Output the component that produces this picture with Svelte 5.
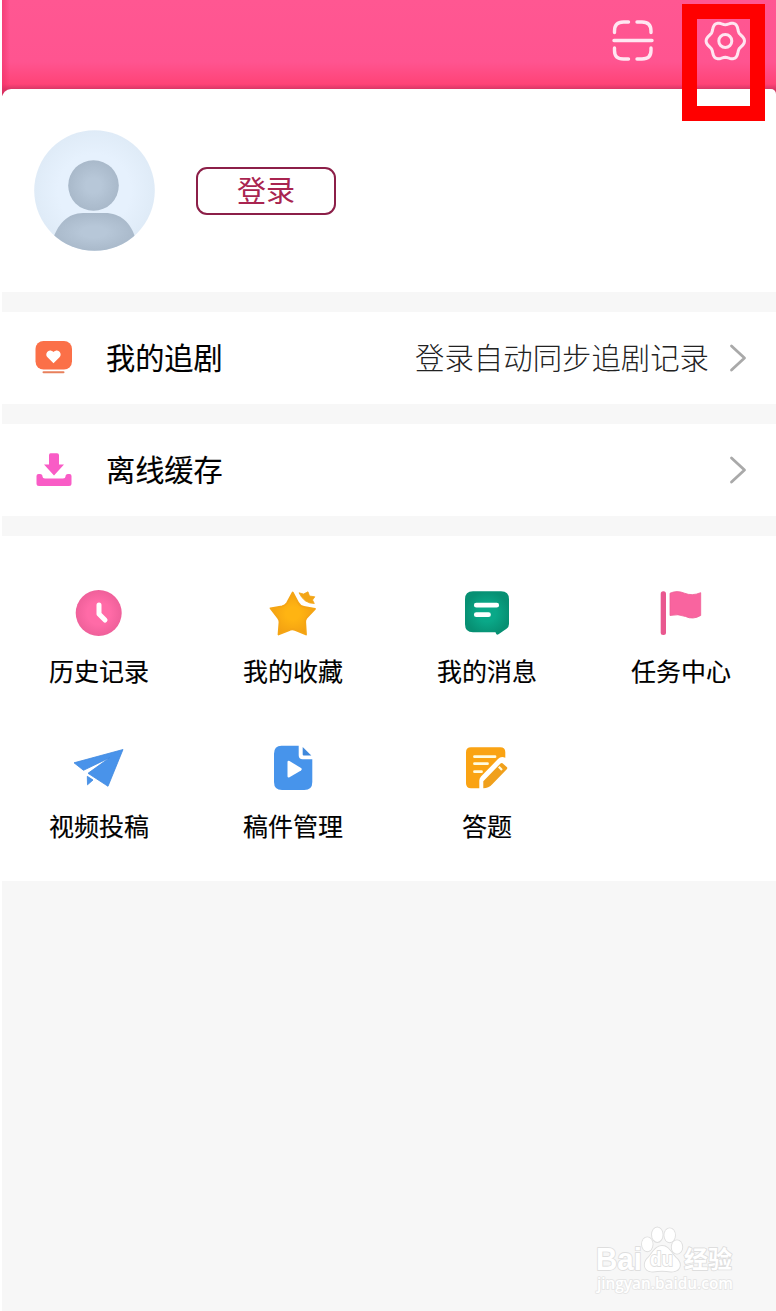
<script>
  const rows = [
    { id: 'follow', label: '我的追剧', hint: '登录自动同步追剧记录' },
    { id: 'offline', label: '离线缓存', hint: '' }
  ];

  const tools = [
    { id: 'history', label: '历史记录' },
    { id: 'favorite', label: '我的收藏' },
    { id: 'message', label: '我的消息' },
    { id: 'task', label: '任务中心' },
    { id: 'upload', label: '视频投稿' },
    { id: 'manage', label: '稿件管理' },
    { id: 'quiz', label: '答题' }
  ];

  // six soft lobes around the settings ring
  function gearPath() {
    const pts = [];
    for (let a = 0; a < 360; a += 5) {
      const t = (a * Math.PI) / 180;
      const r = 17.5 + 1.7 * Math.cos(6 * t);
      pts.push(`${(22.3 + r * Math.cos(t)).toFixed(2)} ${(22 + r * 1.03 * Math.sin(t)).toFixed(2)}`);
    }
    return 'M' + pts.join('L') + 'Z';
  }
</script>

<div class="page">
  <header class="topbar">
    <button class="icon-btn" aria-label="扫一扫">
      <svg width="44" height="44" viewBox="0 0 44 44" fill="none" stroke="#ffe6f1" stroke-width="3.4" stroke-linecap="round">
        <path d="M3.5 13.5V12Q3.5 3 12.5 3H17.5M26 3H31Q40 3 40 12V13.5M40 29V31.5Q40 40 31 40H26M17.5 40H12.5Q3.5 40 3.5 31.5V29M3 21.500H41" />
      </svg>
    </button>
    <div class="settings">
      <button class="icon-btn" aria-label="设置">
        <svg width="44" height="44" viewBox="0 0 44 44" fill="none" stroke="#ffe6f1" stroke-width="3" stroke-linejoin="round">
          <path d={gearPath()} />
          <circle cx="22.3" cy="22" r="6.5" />
        </svg>
      </button>
      <div class="highlight"></div>
    </div>
  </header>

  <section class="profile">
    <svg class="avatar" width="121" height="121" viewBox="0 0 121 121">
      <defs>
        <clipPath id="face"><circle cx="60.5" cy="60.5" r="60.3" /></clipPath>
        <radialGradient id="sky"><stop offset="0.6" stop-color="#e6f1fd" /><stop offset="1" stop-color="#dfebf7" /></radialGradient>
        <radialGradient id="skin"><stop offset="0.3" stop-color="#b7c7d8" /><stop offset="1" stop-color="#a9b9ca" /></radialGradient>
      </defs>
      <circle cx="60.5" cy="60.5" r="60.3" fill="url(#sky)" />
      <circle cx="59.5" cy="55.5" r="25.3" fill="url(#skin)" />
      <path clip-path="url(#face)" fill="url(#skin)" d="M18 112C23 94 34 83 49 83H71C86 83 97 92 102 110V121H18Z" />
    </svg>
    <button class="login">登录</button>
  </section>

  {#each rows as row}
    <section class="row">
      <svg class="row-icon" width="40" height="40" viewBox="0 0 40 40">
        {#if row.id === 'follow'}
          <rect x="1.5" y="4" width="36.5" height="28.5" rx="8" fill="#fb7048" />
          <path d="M19.5 26.2L13.500 20.300C10 16.500 15 10.500 19.500 15C24 10.500 29 16.500 25.500 20.300Z" fill="#fff" />
          <path d="M9.500 35.300H29.500" stroke="#e8805c" stroke-width="2" stroke-linecap="round" />
        {:else}
          <path d="M16.500 4.300H23Q25 4.300 25 6.300V15.500H30L20 26.500L10 15.500H15V6.300Q15 4.300 16.500 4.300Z" fill="#f95cc6" />
          <path d="M4.500 25H6Q8.500 25 8.500 27.500Q8.500 29.500 11 29.500H29Q31.500 29.500 31.500 27.500Q31.500 25 34 25H35.500Q37.500 25 37.500 27V34.500Q37.500 37 35 37H5Q2.500 37 2.500 34.500V27Q2.500 25 4.500 25Z" fill="#f95cc6" />
        {/if}
      </svg>
      <span class="row-label">{row.label}</span>
      <span class="row-hint">{row.hint}</span>
      <svg class="arrow" width="18" height="30" viewBox="0 0 18 30" fill="none" stroke="#a9a9a9" stroke-width="2.8" stroke-linecap="round" stroke-linejoin="round">
        <path d="M2.500 3L15.500 15L2.500 27" />
      </svg>
    </section>
  {/each}

  <section class="tools">
    {#each tools as tool}
      <div class="tool">
        <svg width="60" height="60" viewBox="0 0 60 60">
          {#if tool.id === 'history'}
            <radialGradient id="rose"><stop offset="0.5" stop-color="#ff6ba7" /><stop offset="1" stop-color="#ef609a" /></radialGradient>
            <circle cx="29.7" cy="30" r="23" fill="url(#rose)" />
            <path d="M30 22V31L36 37" fill="none" stroke="#fff" stroke-width="5" stroke-linecap="round" stroke-linejoin="round" />
          {:else if tool.id === 'favorite'}
            <radialGradient id="gold"><stop offset="0.3" stop-color="#ffb412" /><stop offset="1" stop-color="#f3a112" /></radialGradient>
            <path d="M29.700 9.500L35 19.500Q37 23.300 41 24L52 25.800L43.500 35Q42 37 42.200 39L43 51.500L32 46.800Q29.500 45.700 27 46.800L15.500 51.500L16.500 39Q16.500 37 15 35L7.500 25.300L19 23.300Q22 22.500 24 20Z" fill="url(#gold)" stroke="#f5a514" stroke-width="1.8" stroke-linejoin="round" />
            <path d="M36 9.800L40.500 11L45 8.800L46.500 13L51.800 13.800L49.500 17L51.300 20.500Q41 20.500 36 9.800Z" fill="#f3a516" stroke="#f3a516" stroke-width="0.8" stroke-linejoin="round" />
          {:else if tool.id === 'message'}
            <radialGradient id="jade"><stop offset="0.4" stop-color="#0aa888" /><stop offset="1" stop-color="#079073" /></radialGradient>
            <path d="M16 8.300H44Q52 8.300 52 16.300V41Q52 44 49.500 45.800L41.500 51.300Q39.500 52.300 39 50.500L38.500 49.300H16Q8 49.300 8 41.300V16.300Q8 8.300 16 8.300Z" fill="url(#jade)" />
            <path d="M19.300 22.200H39.700M19.300 31.700H31.500" stroke="#fff" stroke-width="4.8" stroke-linecap="round" />
          {:else if tool.id === 'task'}
            <rect x="9.7" y="8.3" width="5.3" height="43.7" rx="2.5" fill="#e9588f" />
            <path d="M19 10.200Q26 7 33.500 10.200Q41 13.300 49.700 9.700V32.500Q42 37 34.500 33.500Q27 30.500 19 32.500Z" fill="#f9649f" stroke="#ef5d96" stroke-width="0.8" stroke-linejoin="round" />
          {:else if tool.id === 'upload'}
            <g fill="#4993ea" stroke="#4089df" stroke-width="0.8" stroke-linejoin="round">
              <path d="M54 11.500L5 24.800L14.500 32.300L40.700 19.700L19 35.300L39 48.300Z" />
              <path d="M18.300 38.300L24 42L18.500 46.800Z" />
            </g>
          {:else if tool.id === 'manage'}
            <path d="M18.500 7.700H35.700V17.300Q35.700 21.300 39.700 21.300H49.300V44Q49.300 52 41.300 52H19Q11 52 11 44V15.700Q11 7.700 18.500 7.700Z" fill="#4794eb" />
            <path d="M39.700 9L48.300 17.500H40.700Q39.700 17.500 39.700 16.500Z" fill="#3f88dc" />
            <path d="M24.500 24V38.500Q24.800 40 26.500 39.200L38 32.500Q39.500 31.300 38 30.100L26.500 23Q24.500 22.300 24.500 24Z" fill="#fff" />
          {:else if tool.id === 'quiz'}
            <path d="M14 9.300H43.300Q48.300 9.300 48.300 14.300V19.800Q44 17.800 41 21L24 38.500Q22.300 40.300 22.300 42.500V50.300H14Q9 50.300 9 45.300V14.300Q9 9.300 14 9.300Z" fill="#faa313" />
            <path d="M26.300 50.300V43.300L43.500 25.500Q44.500 24.500 45.500 25.300L50 29.200Q50.800 30 50 31L35.500 46Q31.500 50.300 26.300 50.300Z" fill="#f0a01c" />
            <path d="M17.500 18.700H38M17.500 25.700H30.500M17.500 33.700H24.500" stroke="#fffbe0" stroke-width="2.8" stroke-linecap="round" />
            <path d="M41.800 28.800L45 32" stroke="#fffbe0" stroke-width="2.2" />
          {/if}
        </svg>
        <span>{tool.label}</span>
      </div>
    {/each}
  </section>

  <footer class="brand">
    <svg width="160" height="80" viewBox="0 0 160 80" fill="#fff" stroke="#dedede" stroke-width="1.8" stroke-linejoin="round" paint-order="stroke">
      <text class="logo" x="13" y="52" textLength="46" lengthAdjust="spacingAndGlyphs">Bai</text>
      <ellipse cx="64.3" cy="26.3" rx="5.3" ry="7" />
      <ellipse cx="74.3" cy="16.7" rx="5.3" ry="7.3" />
      <ellipse cx="86.7" cy="17.3" rx="5.3" ry="7" />
      <ellipse cx="94" cy="29" rx="5.3" ry="6.7" />
      <path d="M79 28C73 28 70 34 66 39C59 45 61 53.800 70 53.500Q79 52 88 53.500C97 53.800 100 46 93 40C88 35 86 28 79 28Z" />
      <text class="du" x="67" y="48" textLength="23" lengthAdjust="spacingAndGlyphs">du</text>
      <text class="exp" x="101" y="50" textLength="48" lengthAdjust="spacingAndGlyphs">经验</text>
      <text class="url" x="14" y="70.5" textLength="136" lengthAdjust="spacingAndGlyphs">jingyan.baidu.com</text>
    </svg>
  </footer>
</div>

<style>
  :global(body) { margin: 0; background: #fff; }

  .page { box-sizing: border-box; width: 774px; height: 1311px; margin-left: 2px; background: #f7f7f7; display: flex; flex-direction: column; overflow: hidden; font-family: 'Noto Sans CJK SC', sans-serif; color: #000; }
  button { font-family: inherit; padding: 0; background: none; border: none; }
  svg { display: block; flex-shrink: 0; }

  .topbar { box-sizing: border-box; height: 96px; margin-bottom: -8px; padding: 19px 29px 0 0; display: flex; justify-content: flex-end; align-items: flex-start; gap: 48px; flex-shrink: 0; background: linear-gradient(to right, rgba(235, 45, 100, 0.55), rgba(255, 70, 130, 0) 8px), linear-gradient(#ff5792 0, #ff5490 62px, #ff4377 84px, #d93766 89px, #b62d55 96px); }
  .settings { position: relative; z-index: 1; }
  .highlight { position: absolute; left: -21px; top: -15px; width: 53px; height: 87px; border: 15px solid #ff0000; }

  .profile { position: relative; box-sizing: border-box; height: 203px; margin-top: 1px; padding: 0 32px; display: flex; align-items: center; gap: 41px; flex-shrink: 0; background: #fff; border-radius: 9px 5px 0 0; }
  .login { box-sizing: border-box; width: 140px; height: 48px; border: 2px solid #8c1f48; border-radius: 11px; font-size: 29px; line-height: 39px; padding-bottom: 2px; color: #a92450; }

  .row { box-sizing: border-box; height: 92.5px; margin-top: 19.5px; padding: 0 29px 0 32px; display: flex; align-items: center; flex-shrink: 0; background: #fff; }
  .row-icon { margin-bottom: 1px; }
  .row-label { margin: 0 0 4px 32px; font-size: 29.2px; -webkit-text-stroke: 0.15px #000; }
  .row-hint { flex: 1; margin: 0 20px 3px 0; text-align: right; font-size: 29.4px; font-weight: 300; color: #222; }

  .tools { box-sizing: border-box; height: 345.5px; margin-top: 19.5px; padding-top: 47px; display: grid; grid-template-columns: repeat(4, 194px); grid-auto-rows: 155px; flex-shrink: 0; background: #fff; }
  .tool { display: flex; flex-direction: column; align-items: center; }
  .tool span { margin-top: 9.500px; font-size: 25px; line-height: 36px; -webkit-text-stroke: 0.15px #000; }

  .brand { margin-top: auto; padding: 0 33px 13px 0; display: flex; justify-content: flex-end; }
  .brand text { font-family: 'Liberation Sans', 'Noto Sans CJK SC', sans-serif; font-weight: 700; }
  .brand .logo { font-size: 31px; }
  .brand .du { font-size: 20px; }
  .brand .exp { font-family: 'Noto Sans CJK SC', sans-serif; font-size: 24px; }
  .brand .url { font-family: 'Open Sans', sans-serif; font-size: 16px; font-weight: 600; stroke: #e6e6e6; }
</style>
